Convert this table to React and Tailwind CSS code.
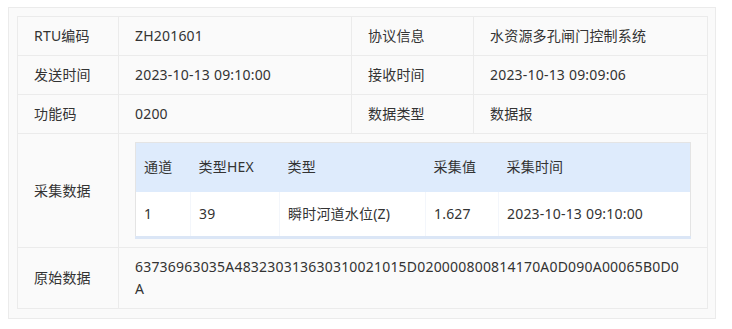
import React from "react";

const hex = "63736963035A4832303136303100" + "21015D020000800814170A0D090A00065B0D0A";

function Label({ children, rowSpan, colSpan }) {
  return (
    <td className="border border-[#ebebeb] px-4 py-2 align-middle text-[#333]" rowSpan={rowSpan} colSpan={colSpan}>
      {children}
    </td>
  );
}
function Val({ children, colSpan, className = "" }) {
  return (
    <td className={"border border-[#ebebeb] px-4 py-2 align-middle text-[#333] " + className} colSpan={colSpan}>
      {children}
    </td>
  );
}

export default function App() {
  return (
    <div
      className="w-[732px] h-[329px] bg-white pt-[7px] pl-[8px] tracking-[0.2px]"
      style={{ fontFamily: '"Noto Sans", "Noto Sans CJK SC", sans-serif' }}
    >
      <div className="w-[708px] h-[312px] border border-[#ebebeb] bg-[#fafafa] p-2">
        <table className="table-fixed border-collapse w-[690px] text-[14px] leading-[22px]">
          <colgroup>
            <col className="w-[101px]" />
            <col className="w-[233px]" />
            <col className="w-[122px]" />
            <col className="w-[234px]" />
          </colgroup>
          <tbody>
            <tr>
              <Label>RTU编码</Label>
              <Val>ZH201601</Val>
              <Label>协议信息</Label>
              <Val>水资源多孔闸门控制系统</Val>
            </tr>
            <tr>
              <Label>发送时间</Label>
              <Val>2023-10-13 09:10:00</Val>
              <Label>接收时间</Label>
              <Val>2023-10-13 09:09:06</Val>
            </tr>
            <tr>
              <Label>功能码</Label>
              <Val>0200</Val>
              <Label>数据类型</Label>
              <Val>数据报</Val>
            </tr>
            <tr>
              <Label>采集数据</Label>
              <td colSpan={3} className="border border-[#ebebeb] px-4 pt-2 pb-[8px]">
                <table className="table-fixed border-collapse w-full text-[14px] leading-[22px] border border-[#e4e4e4] border-b-[3px] border-b-[#dbe6f6]">
                  <colgroup>
                    <col className="w-[55px]" />
                    <col className="w-[89px]" />
                    <col className="w-[146px]" />
                    <col className="w-[73px]" />
                    <col />
                  </colgroup>
                  <thead>
                    <tr className="bg-[#deebfc] text-[#333]">
                      <th className="h-[49px] px-2 text-left font-normal">通道</th>
                      <th className="px-2 text-left font-normal">类型HEX</th>
                      <th className="px-2 text-left font-normal">类型</th>
                      <th className="px-2 text-left font-normal">采集值</th>
                      <th className="px-2 text-left font-normal">采集时间</th>
                    </tr>
                  </thead>
                  <tbody>
                    <tr className="bg-white text-[#333]">
                      <td className="h-[46px] px-2 border-r border-[#f3f6fb]">1</td>
                      <td className="px-2 border-r border-[#f3f6fb]">39</td>
                      <td className="px-2 border-r border-[#f3f6fb]">瞬时河道水位(Z)</td>
                      <td className="px-2 border-r border-[#f3f6fb]">1.627</td>
                      <td className="px-2">2023-10-13 09:10:00</td>
                    </tr>
                  </tbody>
                </table>
              </td>
            </tr>
            <tr>
              <Label>原始数据</Label>
              <Val colSpan={3}>
                <div className="max-w-[550px] break-all">{hex}</div>
              </Val>
            </tr>
          </tbody>
        </table>
      </div>
    </div>
  );
}
